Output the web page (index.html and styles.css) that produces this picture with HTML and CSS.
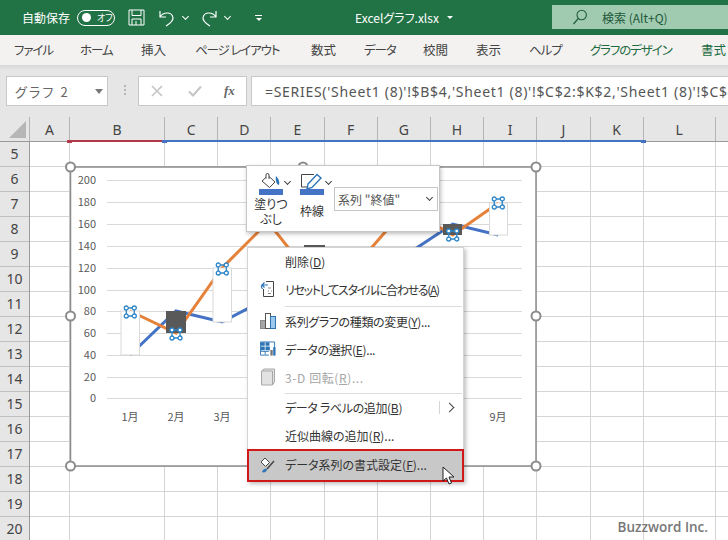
FILE: index.html
```html
<!DOCTYPE html>
<html lang="ja">
<head>
    <meta charset="UTF-8">
    <meta name="viewport" content="width=device-width, initial-scale=1.0">
    <title>Excelグラフ.xlsx</title>
    <link rel="stylesheet" href="styles.css">
</head>
<body>
    <div class="app">
        <header class="titlebar">
            <span class="autosave">自動保存</span>
            <span class="toggle"><i></i><b>オフ</b></span>
            <svg class="qat save" width="17" height="17" viewBox="0 0 17 17"><path d="M1 1h15v15H1zM4 1v5.500h9V1M4 16v-6h9v6M8 12v4" fill="none" stroke="#fff" stroke-width="1"/></svg>
            <svg class="qat undo" width="18" height="18" viewBox="0 0 18 18"><path d="M2 2v6h6M2 8c3-5 12-6 13 1 0 4-4 6-7 8" fill="none" stroke="#fff" stroke-width="1.200"/></svg>
            <span class="caret"></span>
            <svg class="qat redo" width="18" height="18" viewBox="0 0 18 18"><path d="M16 2v6h-6M16 8c-3-5-12-6-13 1 0 4 4 6 7 8" fill="none" stroke="#fff" stroke-width="1.200"/></svg>
            <span class="caret"></span>
            <span class="customize"></span>
            <span class="filename">Excelグラフ.xlsx</span>
            <span class="file-caret"></span>
            <div class="search">
                <svg width="16" height="16" viewBox="0 0 16 16"><circle cx="9.700" cy="6" r="4.700" fill="none" stroke="#1f5c3a" stroke-width="1.100"/><path d="M6.300 9.500 1.500 15" stroke="#1f5c3a" stroke-width="1.200"/></svg>
                <span>検索 (Alt+Q)</span>
            </div>
        </header>

        <nav class="tabs">
            <span class="tab kana w-file">ファイル</span>
            <span class="tab kana w-home">ホーム</span>
            <span class="tab w-insert">挿入</span>
            <span class="tab kana w-layout">ページ レイアウト</span>
            <span class="tab w-formula">数式</span>
            <span class="tab kana w-data">データ</span>
            <span class="tab w-review">校閲</span>
            <span class="tab w-view">表示</span>
            <span class="tab kana w-help">ヘルプ</span>
            <span class="tab kana w-design accent">グラフのデザイン</span>
            <span class="tab accent">書式</span>
        </nav>

        <div class="formula-bar">
            <div class="name-box"><span>グラフ 2</span><i></i></div>
            <div class="dots"></div>
            <div class="fx-buttons">
                <svg width="12" height="12" viewBox="0 0 12 12"><path d="M1 1l10 10M11 1 1 11" stroke="#c4c4c4" stroke-width="1.600"/></svg>
                <svg width="14" height="12" viewBox="0 0 14 12"><path d="M1 6.500 5 10.500 13 1.500" fill="none" stroke="#c4c4c4" stroke-width="2"/></svg>
                <span class="fx">fx</span>
            </div>
            <div class="formula">=SERIES('Sheet1 (8)'!$B$4,'Sheet1 (8)'!$C$2:$K$2,'Sheet1 (8)'!$C$4:$K$4,2)</div>
        </div>

        <div class="col-headers">
            <div class="corner"><i></i></div>
            <span class="col w40">A</span>
            <span class="col w95 sel-red">B</span>
            <span class="col w53 sel-blue sel-start">C</span>
            <span class="col w53 sel-blue">D</span>
            <span class="col w53 sel-blue">E</span>
            <span class="col w53 sel-blue">F</span>
            <span class="col w53 sel-blue">G</span>
            <span class="col w53 sel-blue">H</span>
            <span class="col w53 sel-blue">I</span>
            <span class="col w53 sel-blue">J</span>
            <span class="col w53 sel-blue sel-end">K</span>
            <span class="col w72">L</span>
            <span class="col w14"></span>
        </div>

        <div class="sheet">
            <div class="row-headers">
                <span>5</span><span>6</span><span>7</span><span>8</span>
                <span>9</span><span>10</span><span>11</span><span>12</span>
                <span>13</span><span>14</span><span>15</span><span>16</span>
                <span>17</span><span>18</span><span>19</span><span>20</span>
            </div>
            <div class="cells">
                <i class="w40"></i><i class="w95"></i><i class="w53"></i><i class="w53"></i>
                <i class="w53"></i><i class="w53"></i><i class="w53"></i><i class="w53"></i>
                <i class="w53"></i><i class="w53"></i><i class="w53"></i><i class="w72"></i>
            </div>

            <!-- chart floats over the cells, coordinates are relative to the sheet -->
            <svg class="chart" width="728" height="400" viewBox="0 142 728 400">
                <rect x="70.500" y="167" width="465.500" height="299" fill="#fff" stroke="#8c8c8c" stroke-width="1.500"/>
                <g stroke="#d9d9d9" stroke-width="1">
                    <path d="M107 180.500H522M107 202.500H522M107 224.500H522M107 246.500H522M107 268.500H522M107 290.500H522M107 311.500H522M107 333.500H522M107 355.500H522M107 377.500H522M107 398.500H522"/>
                </g>
                <g class="axis" text-anchor="end">
                    <text x="96" y="184">200</text><text x="96" y="206">180</text>
                    <text x="96" y="228">160</text><text x="96" y="250">140</text>
                    <text x="96" y="272">120</text><text x="96" y="294">100</text>
                    <text x="96" y="315">80</text><text x="96" y="337">60</text>
                    <text x="96" y="359">40</text><text x="96" y="381">20</text>
                    <text x="96" y="402">0</text>
                </g>
                <g class="axis" text-anchor="middle">
                    <text x="130" y="421">1月</text><text x="176" y="421">2月</text><text x="222" y="421">3月</text>
                    <text x="452" y="421">8月</text><text x="498" y="421">9月</text>
                </g>
                <polyline points="130,355 176,311 222,322 268,298 314,290 360,300 406,255 452.700,224 498.300,235" fill="none" stroke="#4472c4" stroke-width="3"/>
                <polyline points="130,311 176,333 222,268 268,222 314,280 360,261 406,208 452.700,235 498.300,203" fill="none" stroke="#e6813a" stroke-width="3"/>
                <g stroke="#d9d9d9" stroke-width="1">
                    <rect x="121" y="311" width="18.500" height="44" fill="#fff"/>
                    <rect x="213" y="268" width="18.500" height="54" fill="#fff"/>
                    <rect x="489.500" y="203" width="18" height="32" fill="#fff"/>
                </g>
                <rect x="166" y="311" width="20" height="22" fill="#595959"/>
                <rect x="304" y="245" width="21" height="30" fill="#595959"/>
                <rect x="443" y="224" width="19" height="11" fill="#595959"/>
                <defs>
                    <g id="mark" fill="#fff" stroke="#2e86c8" stroke-width="1.300">
                        <path d="M-4-4H4V4H-4Z" fill="none"/>
                        <circle cx="-4" cy="-4" r="2"/><circle cx="4" cy="-4" r="2"/>
                        <circle cx="-4" cy="4" r="2"/><circle cx="4" cy="4" r="2"/>
                    </g>
                </defs>
                <use href="#mark" x="130.300" y="312"/>
                <use href="#mark" x="176" y="334"/>
                <use href="#mark" x="222.300" y="269"/>
                <use href="#mark" x="452.700" y="235"/>
                <use href="#mark" x="498.300" y="203"/>
                <g fill="#fff" stroke="#8c8c8c" stroke-width="2">
                    <circle cx="70.500" cy="167" r="4.500"/><circle cx="303" cy="167" r="4.500"/><circle cx="536" cy="167" r="4.500"/>
                    <circle cx="70.500" cy="316" r="4.500"/><circle cx="536" cy="316" r="4.500"/>
                    <circle cx="70.500" cy="466" r="4.500"/><circle cx="536" cy="466" r="4.500"/>
                </g>
            </svg>

            <div class="mini-toolbar">
                <div class="mini-btn">
                    <svg width="24" height="23" viewBox="0 0 24 23">
                        <path d="M3 8 9 2.500l7 6.500-5.500 5.500z" fill="#fff" stroke="#444" stroke-width="1"/>
                        <path d="M7 5.500V2a1.500 1.500 0 0 1 3 0v4" fill="#fff" stroke="#444" stroke-width="1"/>
                        <path d="M17 3c2 2 4 5 3 9-2 0-4-4-3-9z" fill="#2e75b6"/>
                        <rect x="0" y="16" width="24" height="6" fill="#4472c4"/>
                    </svg>
                    <span>塗りつ<br>ぶし</span>
                </div>
                <i class="chev"></i>
                <div class="mini-btn line-btn">
                    <svg width="24" height="23" viewBox="0 0 24 23">
                        <path d="M1.500 14V1.500H14M1.500 14H7" fill="none" stroke="#444" stroke-width="1"/>
                        <path d="M8 11 17 1.500l4 3.500-9 9.500-5 1.500z" fill="#fff" stroke="#2e75b6" stroke-width="1.400"/>
                        <rect x="0" y="16" width="24" height="6" fill="#4472c4"/>
                    </svg>
                    <span>枠線</span>
                </div>
                <i class="chev"></i>
                <div class="series-select"><span>系列 "終値"</span><i class="chev"></i></div>
            </div>

            <ul class="context-menu">
                <li><span class="ico"></span><span>削除(<u>D</u>)</span></li>
                <li>
                    <svg class="ico" width="16" height="18" viewBox="0 0 16 18"><path d="M3.500 9v7.500h10v-15H6" fill="#fff" stroke="#444"/><path d="M8 5H2.500C1 5 1 8.500 3 8.500M4.500 2.500 2 5l2.500 2.500" fill="none" stroke="#2e75b6" stroke-width="1.200"/><path d="M8 8h3M8 11h1M11 11h1M8 13.500h3" stroke="#888"/></svg>
                    <span class="squeeze">リセットしてスタイルに合わせる(<u>A</u>)</span>
                </li>
                <li class="sep"></li>
                <li>
                    <svg class="ico" width="16" height="16" viewBox="0 0 16 16"><rect x=".5" y="7.500" width="5" height="8" fill="#a6a6a6" stroke="#8a8a8a"/><rect x="5.500" y=".5" width="5" height="15" fill="#fff" stroke="#555"/><rect x="10.500" y="3.500" width="5" height="12" fill="#9dc8ee" stroke="#2e75b6"/></svg>
                    <span class="narrow">系列グラフの種類の変更(<u>Y</u>)...</span>
                </li>
                <li>
                    <svg class="ico" width="17" height="16" viewBox="0 0 17 16"><rect x=".5" y=".5" width="10" height="9" fill="#2e75b6"/><path d="M.5.500h15v5M.5.500v14h9M5.500.500v14M10.500.500v5M.5 5h15M.5 10h9" fill="none" stroke="#fff" stroke-width=".8"/><path d="M.5.500h15v6M.5.500v14h9" fill="none" stroke="#2e75b6"/><path d="M.5 10.500h9M5.500 10v4" stroke="#2e75b6"/><rect x="11" y="9" width="2.500" height="6" fill="#777"/><rect x="14" y="6" width="2.500" height="9" fill="#2e75b6"/></svg>
                    <span class="narrow">データの選択(<u>E</u>)...</span>
                </li>
                <li class="disabled">
                    <svg class="ico" width="16" height="18" viewBox="0 0 16 18"><path d="M1.500 3 4 1h10.500v13l-2 3h-11z" fill="#e2e2e2" stroke="#a8a8a8"/><path d="M1.500 3h11v14" fill="none" stroke="#a8a8a8"/></svg>
                    <span class="wide">3-D 回転(<u>R</u>)...</span>
                </li>
                <li class="sep tight"></li>
                <li class="has-sub"><span class="ico"></span><span class="narrow">データ ラベルの追加(<u>B</u>)</span><span class="sub"></span></li>
                <li><span class="ico"></span><span>近似曲線の追加(<u>R</u>)...</span></li>
                <li class="active">
                    <svg class="ico" width="16" height="16" viewBox="0 0 16 16"><path d="M1 5 5 1l4.500 4.500-4 4z" fill="#fff" stroke="#444"/><path d="M14 4 7 12" stroke="#444" stroke-width="1.500"/><path d="M2 15c1-3 3-4 5-3 0 3-3 4-5 3z" fill="#2e75b6"/></svg>
                    <span>データ系列の書式設定(<u>F</u>)...</span>
                </li>
            </ul>

            <svg class="cursor" width="14" height="20" viewBox="0 0 14 20"><path d="M1 1v14l3.500-3 2.500 6 2.500-1-2.500-6h5z" fill="#fff" stroke="#222"/></svg>
            <div class="watermark">Buzzword Inc.</div>
        </div>
    </div>
</body>
</html>
```
FILE: styles.css
```css
* {
    box-sizing: border-box;
}
html, body {
    margin: 0;
    height: 100%;
    overflow: hidden;
}
body {
    font-family: "Noto Sans CJK JP", "Liberation Sans", sans-serif;
    font-feature-settings: "palt";
    background: #fff;
    color: #444;
}
.app {
    width: 728px;
    height: 540px;
    overflow: hidden;
    display: flex;
    flex-direction: column;
}

/* title bar */
.titlebar {
    height: 35px;
    flex: none;
    background: #217346;
    color: #fff;
    display: flex;
    align-items: center;
    padding-left: 22px;
    font-size: 12px;
}
.autosave {
    width: 55px;
}
.toggle {
    width: 38px;
    height: 16px;
    border: 1px solid #fff;
    border-radius: 8px;
    display: flex;
    align-items: center;
    padding-left: 4px;
    margin-right: 13px;
}
.toggle i {
    width: 9px;
    height: 9px;
    border-radius: 50%;
    background: #fff;
}
.toggle b {
    font-weight: 400;
    font-size: 9px;
    margin-left: 6px;
}
.qat {
    flex: none;
}
.save {
    margin-right: 13px;
}
.caret {
    width: 5px;
    height: 5px;
    border-right: 1px solid #fff;
    border-bottom: 1px solid #fff;
    transform: rotate(45deg);
    margin: 0 12px 3px 7px;
}
.customize {
    width: 7px;
    height: 6px;
    margin: 0 0 0 13px;
    border-top: 1px solid #fff;
    position: relative;
}
.customize::after {
    content: "";
    position: absolute;
    left: 1px;
    top: 2px;
    border: 3px solid transparent;
    border-top-color: #fff;
    border-bottom: 0;
}
.filename {
    margin-left: 93px;
    font-size: 12px;
}
.file-caret {
    margin-left: 8px;
    border: 3px solid transparent;
    border-top-color: #fff;
    border-bottom: 0;
}
.search {
    margin-left: auto;
    width: 176px;
    height: 24px;
    margin-top: -1px;
    background: #a0cbb0;
    color: #22583a;
    display: flex;
    align-items: center;
    padding-left: 20px;
    gap: 14px;
    font-size: 12px;
}

/* ribbon tabs */
.tabs {
    height: 30px;
    flex: none;
    background: #f3f2f1;
    display: flex;
    align-items: center;
    padding: 0 0 2px 14px;
    font-size: 12.500px;
    color: #444;
    white-space: nowrap;
}
.tab.kana {
    letter-spacing: -1.100px;
}
.tab.accent {
    color: #1d6b3e;
}
.w-file { width: 66px; }
.w-home { width: 61px; }
.w-insert { width: 54px; }
.w-layout { width: 116px; }
.w-formula { width: 53px; }
.w-data { width: 59px; }
.w-review { width: 53px; }
.w-view { width: 53px; }
.w-help { width: 61px; }
.w-design { width: 111px; }

/* formula bar */
.formula-bar {
    height: 52px;
    flex: none;
    background: #e6e6e6;
    box-shadow: inset 0 5px 4px -3px #d4d4d4;
    display: flex;
    padding: 11px 0 11px 6px;
}
.name-box, .fx-buttons, .formula {
    background: #fff;
    border: 1px solid #c8c8c8;
    height: 30px;
    display: flex;
    align-items: center;
}
.name-box {
    width: 102px;
    padding-left: 8px;
    font-size: 13px;
    color: #666;
    justify-content: space-between;
    letter-spacing: 2.200px;
}
.name-box i {
    border: 4px solid transparent;
    border-top: 5px solid #777;
    border-bottom: 0;
    margin-right: 4px;
}
.dots {
    width: 30px;
    position: relative;
}
.dots::after {
    content: "";
    position: absolute;
    left: 16px;
    top: 9px;
    width: 2px;
    height: 10px;
    background: repeating-linear-gradient(#b5b5b5 0 2px, transparent 2px 4px);
}
.fx-buttons {
    width: 109px;
    padding-left: 12px;
    gap: 0;
}
.fx-buttons svg:nth-child(2) {
    margin-left: 25px;
}
.fx {
    margin-left: 22px;
    font-family: "Liberation Serif", serif;
    font-style: italic;
    font-weight: 700;
    font-size: 13px;
    color: #666;
}
.formula {
    margin-left: 4px;
    flex: 1;
    min-width: 0;
    padding-left: 13px;
    font-family: "Noto Sans", sans-serif;
    font-size: 14px;
    letter-spacing: .7px;
    color: #555;
    white-space: nowrap;
    overflow: hidden;
    border-right: 0;
}

/* column and row headers */
.col-headers {
    height: 25px;
    flex: none;
    background: #e6e6e6;
    display: flex;
    border-bottom: 1px solid #9a9a9a;
}
.corner {
    width: 30px;
    flex: none;
    border-right: 1px solid #b5b5b5;
    position: relative;
}
.corner i {
    position: absolute;
    right: 3px;
    bottom: 3px;
    border-style: solid;
    border-width: 0 0 17px 17px;
    border-color: transparent transparent #b6b6b6 transparent;
}
.col {
    flex: none;
    display: flex;
    align-items: center;
    justify-content: center;
    border-right: 1px solid #b5b5b5;
    font-family: "Noto Sans", sans-serif;
    font-size: 14px;
    color: #444;
    position: relative;
}
.w14 { width: 14px; border-right: 0; flex: none; }
.w40 { width: 40px; }
.w95 { width: 95px; }
.w53 { width: 53.200px; }
.w72 { width: 72px; }
.sel-red::after, .sel-blue::after {
    content: "";
    position: absolute;
    left: 0;
    right: -1px;
    bottom: -1px;
    height: 2px;
    background: #4472c4;
}
.sel-red::after {
    background: #b03a48;
}
/* small range handles on the selection lines */
.sel-red::before, .sel-start::before, .sel-end::before {
    content: "";
    position: absolute;
    left: -3px;
    bottom: -2px;
    width: 5px;
    height: 3px;
    background: #4472c4;
    z-index: 1;
}
.sel-red::before {
    background: #b03a48;
}
.sel-end::before {
    left: auto;
    right: -3px;
}
.sheet {
    flex: 1;
    display: flex;
    position: relative;
    min-height: 0;
}
.row-headers {
    width: 30px;
    flex: none;
    background: #e6e6e6;
    border-right: 1px solid #9a9a9a;
    display: flex;
    flex-direction: column;
}
.row-headers span {
    height: 25px;
    flex: none;
    display: flex;
    align-items: center;
    justify-content: center;
    padding-bottom: 2px;
    border-bottom: 1px solid #c0c0c0;
    font-family: "Noto Sans", sans-serif;
    font-size: 14px;
    color: #444;
}
.cells {
    flex: 1;
    display: flex;
    background: repeating-linear-gradient(#fff 0 24px, #d4d4d4 24px 25px);
}
.cells i {
    flex: none;
    border-right: 1px solid #d4d4d4;
}

/* chart */
.chart {
    position: absolute;
    left: 0;
    top: 0;
}
.axis text {
    font-family: "Noto Sans CJK JP", "Liberation Sans", sans-serif;
    font-size: 11px;
    fill: #595959;
}

/* mini toolbar */
.mini-toolbar {
    position: absolute;
    left: 246px;
    top: 23px;
    width: 194px;
    height: 67px;
    background: #fff;
    border: 1px solid #c6c6c6;
    box-shadow: 1px 2px 4px rgba(0,0,0,0.25);
    display: flex;
    align-items: flex-start;
    padding: 7px 0 0 12px;
    font-size: 12px;
    color: #333;
}
.mini-btn {
    width: 24px;
    display: flex;
    flex-direction: column;
    align-items: center;
    line-height: 15px;
    text-align: center;
    white-space: nowrap;
}
.chev {
    flex: none;
    width: 5px;
    height: 5px;
    border-right: 1px solid #444;
    border-bottom: 1px solid #444;
    transform: rotate(45deg);
    margin: 6px 9px 0 2px;
}
.line-btn {
    margin-left: 1px;
}
.line-btn span {
    margin-top: 7px;
}
.series-select {
    width: 104px;
    height: 24px;
    margin: 14px 0 0 -6px;
    border: 1px solid #c6c6c6;
    display: flex;
    align-items: center;
    justify-content: space-between;
    padding-left: 3px;
    color: #555;
    white-space: nowrap;
}
.series-select .chev {
    margin: 0 5px 3px 0;
}

/* context menu */
.context-menu {
    position: absolute;
    left: 247px;
    top: 105px;
    width: 217px;
    height: 235px;
    margin: 0;
    padding: 0;
    list-style: none;
    background: #fff;
    border: 1px solid #d4d4d4;
    box-shadow: 2px 2px 4px rgba(0,0,0,0.25);
    font-size: 12px;
    color: #333;
}
.context-menu li {
    height: 28px;
    display: flex;
    align-items: center;
    padding: 0 0 2px 12px;
    position: relative;
    white-space: nowrap;
}
.context-menu .ico {
    width: 16px;
    margin-right: 9px;
    flex: none;
}
.squeeze {
    letter-spacing: -1.300px;
}
.narrow {
    letter-spacing: -.35px;
}
.wide {
    letter-spacing: .6px;
}
.context-menu li.sep {
    height: 1px;
    margin: 2px 1px 1px 37px;
    padding: 0;
    background: #dcdcdc;
}
.context-menu li.sep.tight {
    margin: 1px 1px 0 37px;
}
.context-menu li.disabled {
    color: #a6a6a6;
}
.sub {
    position: absolute;
    right: 10px;
    top: 10px;
    width: 7px;
    height: 7px;
    border-top: 1px solid #444;
    border-right: 1px solid #444;
    transform: rotate(45deg);
}
.has-sub::before {
    content: "";
    position: absolute;
    right: 23px;
    top: 7px;
    height: 13px;
    border-left: 1px solid #d4d4d4;
}
.context-menu li.active {
    position: absolute;
    left: -1px;
    right: -1px;
    bottom: -1px;
    height: 33px;
    background: #c8c8c8;
    border: 2.500px solid #d01818;
    padding: 0 0 2px 11px;
}
.cursor {
    position: absolute;
    left: 442px;
    top: 324px;
}
.watermark {
    position: absolute;
    right: 20px;
    bottom: 4px;
    font-family: "Open Sans", sans-serif;
    font-weight: 600;
    font-size: 13.500px;
    color: #777;
    text-shadow: 0 0 2px #fff;
}
```
